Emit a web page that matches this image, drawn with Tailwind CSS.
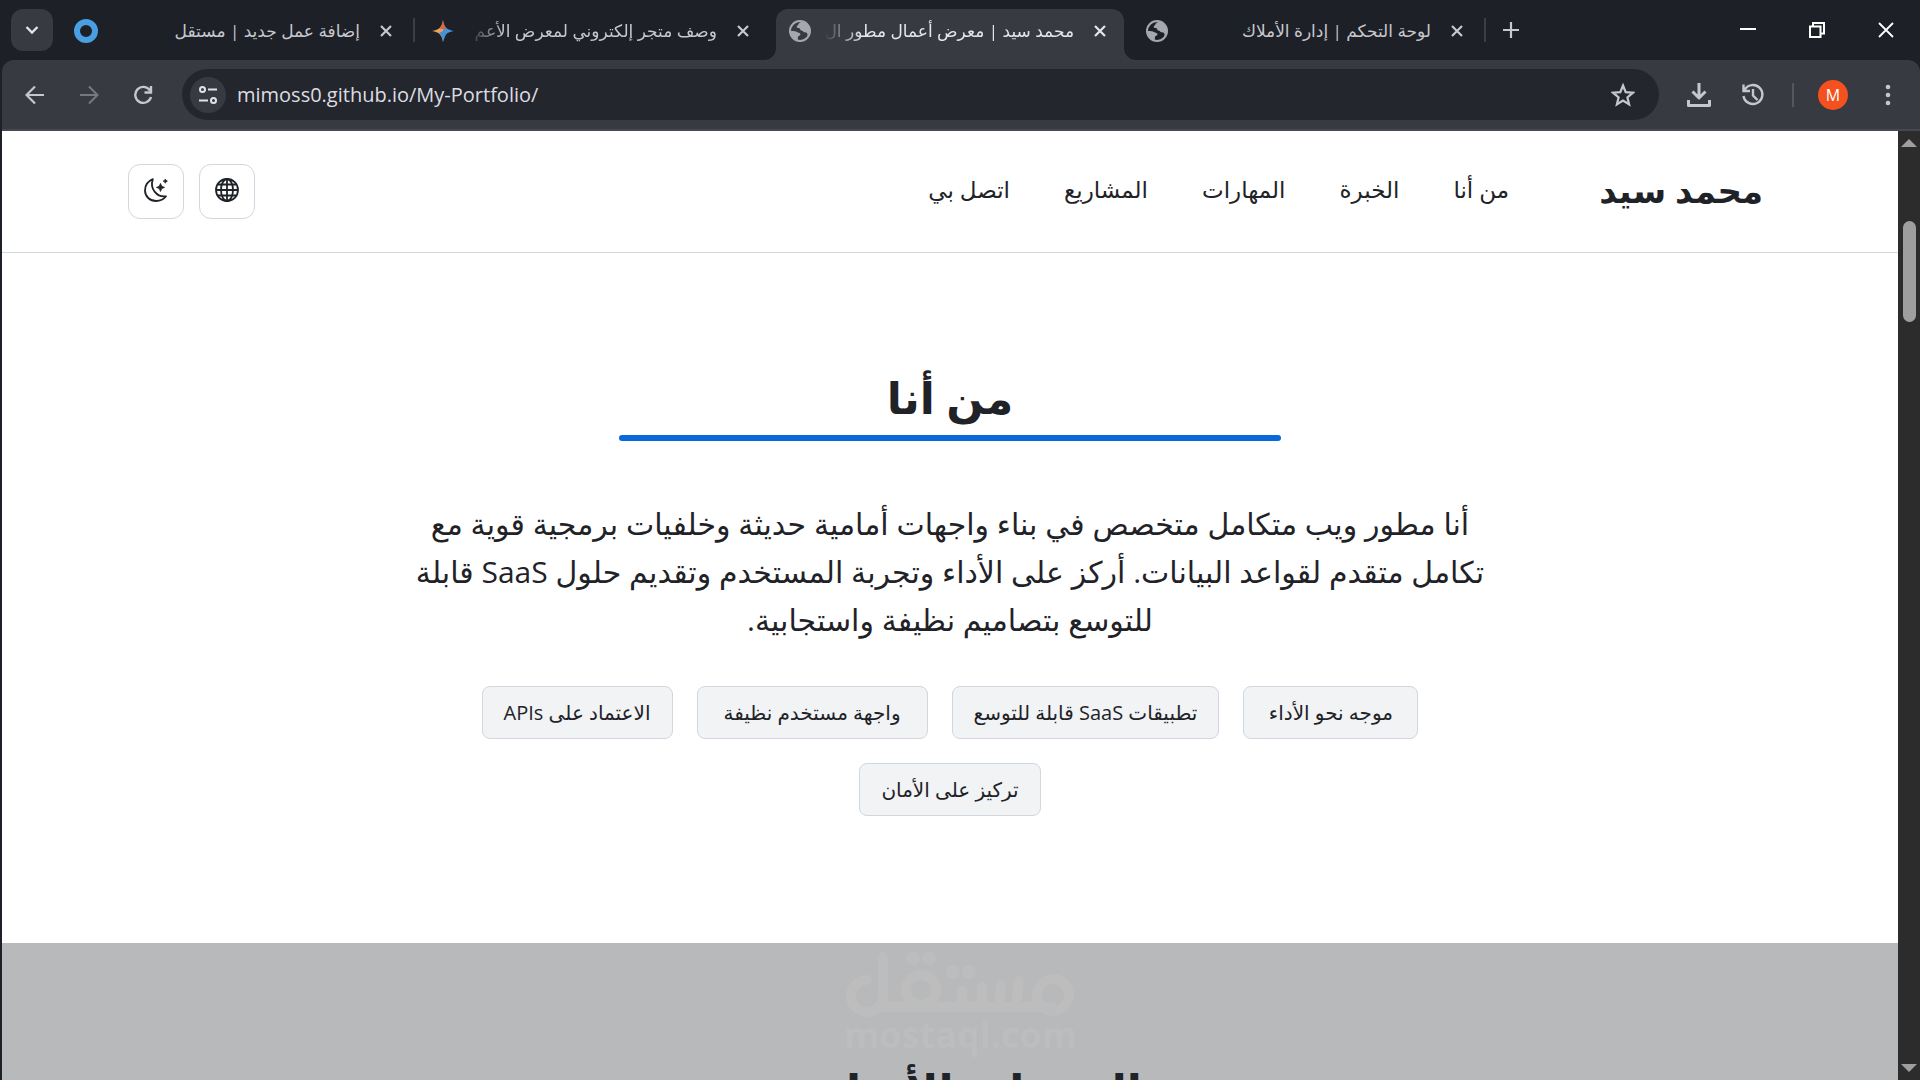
<!DOCTYPE html>
<html lang="ar">
<head>
  <meta charset="UTF-8" />
  <title>محمد سيد | معرض أعمال مطور</title>
  <meta name="viewport" content="width=device-width, initial-scale=1" />
  <script src="https://cdn.jsdelivr.net/npm/@tailwindcss/browser@4"></script>
</head>
<body class="h-screen overflow-hidden flex flex-col bg-[#1d2027] font-['Open_Sans','DejaVu_Sans',sans-serif]">

  <!-- tab strip -->
  <div class="flex items-end h-[60px] shrink-0 text-[#c7c8cd]">
    <button aria-label="Search tabs" class="ml-[11px] mr-[9px] mb-[9px] w-[42px] h-[42px] shrink-0 rounded-xl bg-[#383a42] flex items-center justify-center">
      <svg class="w-5 h-5" viewBox="0 0 20 20" fill="none" stroke="#e3e3e3" stroke-width="2.4"><path d="M4.500 7l5.500 5.500L15.500 7" /></svg>
    </button>

    <div class="relative w-[357px] h-[51px] shrink-0 pl-3 pr-[27px] pb-2 flex items-center">
      <svg class="w-6 h-6 shrink-0" viewBox="0 0 24 24"><circle cx="12" cy="12" r="9" fill="none" stroke="#4a9fe3" stroke-width="6" /></svg>
      <span dir="rtl" class="flex-1 ml-3 mr-5 overflow-hidden whitespace-nowrap text-[17px]">إضافة عمل جديد | مستقل</span>
      <button aria-label="Close tab"><svg class="w-3 h-3" viewBox="0 0 12 12" stroke="currentColor" stroke-width="2.200"><path d="M1 1l10 10M11 1L1 11" /></svg></button>
      <span class="absolute right-1 top-[9px] w-[2px] h-6 bg-[#3c3e46]"></span>
    </div>

    <div class="w-[357px] h-[51px] shrink-0 pl-3 pr-[27px] pb-2 flex items-center">
      <svg class="w-6 h-6 shrink-0" viewBox="0 0 24 24">
        <path d="M12 1C13 8 16 11 23 12C16 13 13 16 12 23Z" fill="#3f97ea" />
        <path d="M12 1C11 8 8 11 1 12C8 13 11 16 12 23Z" fill="#e3a45c" />
        <path d="M12 1C11.500 6 10 8.500 8 10L16 10C14 8.500 12.500 6 12 1Z" fill="#e8603c" />
        <path d="M8 14L16 10L15 15L12 23C11.500 18 10 15.500 8 14Z" fill="#4b8fd6" />
      </svg>
      <span dir="rtl" class="flex-1 ml-3 mr-5 overflow-hidden whitespace-nowrap text-[17px] mask-l-from-85% mask-l-to-100%">وصف متجر إلكتروني لمعرض الأعم</span>
      <button aria-label="Close tab"><svg class="w-3 h-3" viewBox="0 0 12 12" stroke="currentColor" stroke-width="2.200"><path d="M1 1l10 10M11 1L1 11" /></svg></button>
    </div>

    <div class="relative w-[348px] h-[51px] shrink-0 pl-3 pr-[18px] pb-2 mr-[9px] flex items-center rounded-t-xl bg-[#383a42] text-[#e6e6ea]">
      <svg class="absolute -left-3 bottom-0 w-3 h-3" viewBox="0 0 12 12"><path d="M12 0V12H0A12 12 0 0 0 12 0Z" fill="#383a42" /></svg>
      <svg class="absolute -right-3 bottom-0 w-3 h-3" viewBox="0 0 12 12"><path d="M0 0V12H12A12 12 0 0 1 0 0Z" fill="#383a42" /></svg>
      <svg class="w-6 h-6 shrink-0" viewBox="0 0 24 24">
        <circle cx="12" cy="12" r="10" fill="none" stroke="#a5a8ad" stroke-width="2" />
        <path d="M13 3C10 4 11 6 9 7C8 9 10 9 12 9.500C12 11 13 12 15 12C15 14 18 13 19 14L20 17C22 14 22 9 19.500 5.500C17.500 3 15 2.500 13 3ZM2.500 12C6 12 8 12 9 13C10 14 12 13.500 12.500 15C12.500 17 10 16.500 10 18L9.500 21.500C5 20 2.500 16.500 2.500 12Z" fill="#a5a8ad" />
      </svg>
      <span dir="rtl" class="flex-1 ml-3 mr-5 overflow-hidden whitespace-nowrap text-[17px] mask-l-from-85% mask-l-to-100%">محمد سيد | معرض أعمال مطور ال</span>
      <button aria-label="Close tab"><svg class="w-3 h-3" viewBox="0 0 12 12" stroke="currentColor" stroke-width="2.200"><path d="M1 1l10 10M11 1L1 11" /></svg></button>
    </div>

    <div class="relative w-[357px] h-[51px] shrink-0 pl-3 pr-[27px] pb-2 flex items-center">
      <svg class="w-6 h-6 shrink-0" viewBox="0 0 24 24">
        <circle cx="12" cy="12" r="10" fill="none" stroke="#a5a8ad" stroke-width="2" />
        <path d="M13 3C10 4 11 6 9 7C8 9 10 9 12 9.500C12 11 13 12 15 12C15 14 18 13 19 14L20 17C22 14 22 9 19.500 5.500C17.500 3 15 2.500 13 3ZM2.500 12C6 12 8 12 9 13C10 14 12 13.500 12.500 15C12.500 17 10 16.500 10 18L9.500 21.500C5 20 2.500 16.500 2.500 12Z" fill="#a5a8ad" />
      </svg>
      <span dir="rtl" class="flex-1 ml-3 mr-5 overflow-hidden whitespace-nowrap text-[17px]">لوحة التحكم | إدارة الأملاك</span>
      <button aria-label="Close tab"><svg class="w-3 h-3" viewBox="0 0 12 12" stroke="currentColor" stroke-width="2.200"><path d="M1 1l10 10M11 1L1 11" /></svg></button>
      <span class="absolute right-1 top-[9px] w-[2px] h-6 bg-[#3c3e46]"></span>
    </div>

    <button aria-label="New tab" class="ml-[13px] mb-[22px]"><svg class="w-4 h-4" viewBox="0 0 16 16" stroke="currentColor" stroke-width="2.200"><path d="M8 0v16M0 8h16" /></svg></button>

    <div class="ml-auto mr-[26px] mb-[22px] flex gap-[53px] text-white">
      <button aria-label="Minimize"><svg class="w-4 h-4" viewBox="0 0 16 16" stroke="currentColor" stroke-width="2"><path d="M0 7h16" /></svg></button>
      <button aria-label="Restore"><svg class="w-4 h-4" viewBox="0 0 16 16" fill="none" stroke="currentColor" stroke-width="2"><path d="M1 4.500h10.500V15H1zM4 4V1h11v10.500h-3" /></svg></button>
      <button aria-label="Close"><svg class="w-4 h-4" viewBox="0 0 16 16" stroke="currentColor" stroke-width="1.800"><path d="M1 1l14 14M15 1L1 15" /></svg></button>
    </div>
  </div>

  <!-- toolbar -->
  <div class="ml-[2px] h-[71px] shrink-0 flex items-center pr-[29px] rounded-t-xl bg-[#383a42] border-b-2 border-[#46484f] text-[#c7c5d0]">
    <div class="w-[180px] pl-[23px] flex gap-[34px]">
      <button aria-label="Back"><svg class="w-5 h-5" viewBox="0 0 20 20" fill="none" stroke="currentColor" stroke-width="2.200"><path d="M19 10H2M10 1.500L1.500 10L10 18.500" /></svg></button>
      <button aria-label="Forward" class="text-[#777981]"><svg class="w-5 h-5" viewBox="0 0 20 20" fill="none" stroke="currentColor" stroke-width="2"><path d="M1 10H18M10 1.500L18.500 10L10 18.500" /></svg></button>
      <button aria-label="Reload"><svg class="w-5 h-5" viewBox="0 0 20 20" fill="none" stroke="currentColor" stroke-width="2.400"><path d="M17 5.500A8 8 0 1 0 18 12M18 1V7.500H11.500" /></svg></button>
    </div>
    <div class="flex-1 h-[51px] flex items-center pl-2 pr-6 rounded-full bg-[#24262d]">
      <button aria-label="Site information" class="w-9 h-9 rounded-full bg-[#383a42] flex items-center justify-center text-[#e3e3e3]">
        <svg class="w-5 h-5" viewBox="0 0 20 20" fill="none" stroke="currentColor" stroke-width="2"><circle cx="4.500" cy="4.500" r="2.500" /><path d="M10 4.500h9M1 15.500h9" /><circle cx="15.500" cy="15.500" r="2.500" /></svg>
      </button>
      <input aria-label="Address" value="mimoss0.github.io/My-Portfolio/" class="flex-1 ml-[11px] h-8 bg-transparent outline-none text-xl text-[#dcdde2]" />
      <button aria-label="Bookmark"><svg class="w-6 h-6" viewBox="0 0 24 24" fill="none" stroke="currentColor" stroke-width="2.200"><path d="M12 2.500l2.700 6.700 7.200.5-5.500 4.600 1.700 7L12 17.500l-6.100 3.800 1.700-7L2.100 9.700l7.200-.5z" /></svg></button>
    </div>
    <div class="ml-7 flex items-center">
      <button aria-label="Downloads"><svg class="w-6 h-6" viewBox="0 0 24 24" fill="none" stroke="currentColor" stroke-width="3"><path d="M12 0v15M5.500 8.500l6.500 6.500L18.500 8.500M1.500 17v5.500h21V17" stroke-linejoin="round" /></svg></button>
      <button aria-label="History" class="ml-[30px]"><svg class="w-6 h-6" viewBox="0 0 24 24" fill="none" stroke="currentColor" stroke-width="2.400"><path d="M3.500 7A9.500 9.500 0 1 1 2.500 13M2.500 1.500V8H9M12 6v6.500l4.500 4.500" /></svg></button>
      <span class="w-[2px] h-6 ml-[27px] bg-[#55575f]"></span>
      <button class="ml-6 w-[30px] h-[30px] rounded-full bg-[#f4511e] text-white text-base leading-[30px]">M</button>
      <button aria-label="Menu" class="ml-[37px]"><svg class="w-[6px] h-[22px]" viewBox="0 0 6 22" fill="currentColor"><circle cx="3" cy="3" r="2.300" /><circle cx="3" cy="11" r="2.300" /><circle cx="3" cy="19" r="2.300" /></svg></button>
    </div>
  </div>

  <div class="flex-1 min-h-0 flex pl-[2px]">
    <div dir="rtl" class="flex-1 overflow-hidden bg-white text-[#1f2328]">
      <header class="h-[122px] px-[126px] pb-1 flex items-center border-b border-[#d0d7de]">
        <a href="#" class="w-[190px] pr-[9px] pt-[2px] whitespace-nowrap text-[34px] font-bold">محمد سيد</a>
        <nav class="mr-[73px] flex gap-[54px] text-[23px] whitespace-nowrap">
          <a href="#about">من أنا</a>
          <a href="#experience">الخبرة</a>
          <a href="#skills">المهارات</a>
          <a href="#projects">المشاريع</a>
          <a href="#contact">اتصل بي</a>
        </nav>
        <div class="mr-auto pt-1 flex gap-[15px]">
          <button aria-label="اللغة" class="w-14 h-[55px] pb-[3px] rounded-xl border border-[#d0d7de] flex items-center justify-center">
            <svg class="w-6 h-6" viewBox="0 0 24 24" fill="none" stroke="currentColor" stroke-width="1.800"><circle cx="12" cy="12" r="11" /><ellipse cx="12" cy="12" rx="6" ry="11" /><path d="M12 1v22M1 12h22M3 6.500h18M3 17.500h18" /></svg>
          </button>
          <button aria-label="الوضع الليلي" class="w-14 h-[55px] pb-[3px] rounded-xl border border-[#d0d7de] flex items-center justify-center">
            <svg class="w-6 h-6" viewBox="0 0 24 24" fill="none" stroke="currentColor" stroke-width="1.800" stroke-linejoin="round"><path d="M8.800 1.200C4 3.200 1 7.200 1 12.500C1 18.500 6 23 12 23C16.500 23 20 21 22 18.300C13 19.500 5.500 11 8.800 1.200Z" /><path d="M16.500 5.400l1.200 2.800 2.800 1.200-2.800 1.200-1.200 2.800-1.200-2.800-2.800-1.200 2.800-1.200zM21.300 1l.7 1.400 1.400.7-1.400.7-.7 1.400-.7-1.400-1.400-.7 1.400-.7z" fill="currentColor" stroke-width=".8" /></svg>
          </button>
        </div>
      </header>

      <section id="about" class="h-[690px] pt-[110px] flex flex-col items-center text-center">
        <h2 class="h-[72px] text-[44px] leading-[68px] font-bold">من أنا</h2>
        <div class="w-[662px] h-[6px] shrink-0 rounded-full bg-[#0969da]"></div>
        <p class="mt-[59px] text-[30px] leading-[48px] whitespace-nowrap">أنا مطور ويب متكامل متخصص في بناء واجهات أمامية حديثة وخلفيات برمجية قوية مع<br />تكامل متقدم لقواعد البيانات. أركز على الأداء وتجربة المستخدم وتقديم حلول SaaS قابلة<br />للتوسع بتصاميم نظيفة واستجابية.</p>
        <ul class="mt-[42px] w-[1000px] flex flex-wrap justify-center gap-6 text-xl">
          <li class="h-[53px] min-w-[175px] px-[21px] leading-[51px] rounded-lg border border-[#d0d7de] bg-[#f1f3f5]">موجه نحو الأداء</li>
          <li class="h-[53px] px-[21px] leading-[51px] rounded-lg border border-[#d0d7de] bg-[#f1f3f5]">تطبيقات SaaS قابلة للتوسع</li>
          <li class="h-[53px] min-w-[231px] px-[21px] leading-[51px] rounded-lg border border-[#d0d7de] bg-[#f1f3f5]">واجهة مستخدم نظيفة</li>
          <li class="h-[53px] px-[21px] leading-[51px] rounded-lg border border-[#d0d7de] bg-[#f1f3f5]">الاعتماد على APIs</li>
          <li class="h-[53px] px-[21px] leading-[51px] rounded-lg border border-[#d0d7de] bg-[#f1f3f5]">تركيز على الأمان</li>
        </ul>
      </section>

      <section class="relative h-[400px] pt-[110px] bg-[#b8b9bb] text-center">
        <div class="absolute top-2 left-1/2 -translate-x-1/2 ml-[10px] w-[232px] text-[#bdbdbd]">
          <svg role="img" aria-label="مستقل" class="w-[232px] h-[68px]" viewBox="0 0 232 68" fill="none" stroke="currentColor" stroke-width="10" stroke-linecap="round"><path d="M23 29A16 16 0 1 0 39 45V6M36 56H208M138 56V36M118 56V40M155 56L157 34M172 56L175 30" /><circle cx="77" cy="39" r="15" /><circle cx="209" cy="44" r="16" /><g fill="currentColor" stroke="none"><circle cx="69" cy="7" r="7" /><circle cx="85" cy="7" r="7" /><circle cx="109" cy="21" r="7" /><circle cx="125" cy="21" r="7" /></g></svg>
          <p dir="ltr" class="text-4xl leading-8 font-bold">mostaql.com</p>
        </div>
        <h2 class="text-[44px] leading-[72px] font-bold">الخدمات الأساسية</h2>
      </section>
    </div>

    <!-- scrollbar -->
    <div class="w-[22px] py-2 flex flex-col items-center bg-[#2c2c2c]">
      <svg class="w-4 h-2" viewBox="0 0 16 8"><path d="M8 0L16 8H0Z" fill="#9f9f9f" /></svg>
      <div class="mt-[74px] w-[13px] h-[101px] rounded-full bg-[#9f9f9f]"></div>
      <svg class="mt-auto w-4 h-2" viewBox="0 0 16 8"><path d="M8 8L16 0H0Z" fill="#9f9f9f" /></svg>
    </div>
  </div>

</body>
</html>
